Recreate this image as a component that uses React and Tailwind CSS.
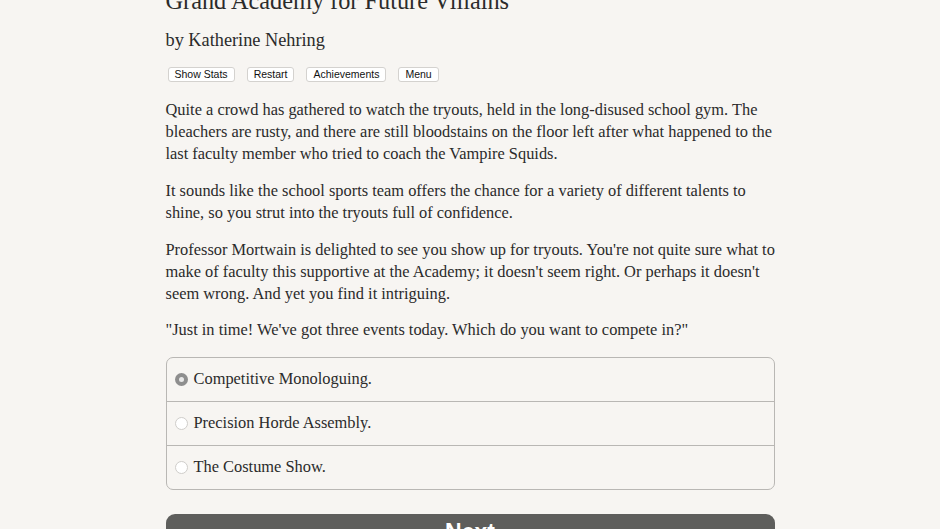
export default function App() {
  const serif = { fontFamily: '"Liberation Serif", "DejaVu Serif", serif' };
  const choices = ["Competitive Monologuing.", "Precision Horde Assembly.", "The Costume Show."];
  const L = ({ children }) => <span className="block whitespace-nowrap">{children}</span>;
  return (
    <div className="w-[940px] h-[529px] overflow-hidden bg-[#f7f5f2] text-[#2b2b2b]" style={serif}>
      <div className="w-[609px] mx-auto">
        <h1 className="text-[24.3px] leading-[30px] -mt-[14px] font-normal text-[#2b2b2b] whitespace-nowrap">Grand Academy for Future Villains</h1>
        <div className="text-[18.3px] leading-[24px] mt-[12px]">by Katherine Nehring</div>
        <div className="flex gap-[12px] mt-[15px] ml-[2px]" style={{ fontFamily: '"Liberation Sans", Arial, sans-serif' }}>
          {["Show Stats", "Restart", "Achievements", "Menu"].map((b) => (
            <div key={b} className="h-[15px] px-[6px] flex items-center text-[10.5px] bg-white border border-[#d4d2cf] rounded-[3px] text-[#111]">{b}</div>
          ))}
        </div>
        <div className="text-[16.4px] leading-[22px] mt-[17px]">
          <p><L>Quite a crowd has gathered to watch the tryouts, held in the long-disused school gym. The</L><L>bleachers are rusty, and there are still bloodstains on the floor left after what happened to the</L><L>last faculty member who tried to coach the Vampire Squids.</L></p>
          <p className="mt-[15px]"><L>It sounds like the school sports team offers the chance for a variety of different talents to</L><L>shine, so you strut into the tryouts full of confidence.</L></p>
          <p className="mt-[15px]"><L>Professor Mortwain is delighted to see you show up for tryouts. You're not quite sure what to</L><L>make of faculty this supportive at the Academy; it doesn't seem right. Or perhaps it doesn't</L><L>seem wrong. And yet you find it intriguing.</L></p>
          <p className="mt-[14px]"><L>"Just in time! We've got three events today. Which do you want to compete in?"</L></p>
        </div>
        <div className="mt-[16px] border border-[#b9b7b4] rounded-[7px]">
          {choices.map((c, i) => (
            <div key={c} className={`h-[43px] box-content flex items-center pl-[8px] gap-[6px] text-[16.4px] ${i > 0 ? "border-t border-[#b9b7b4]" : ""}`}>
              {i === 0 ? (
                <span className="w-[13px] h-[13px] rounded-full bg-[#8e8e8e] flex items-center justify-center">
                  <span className="w-[5px] h-[5px] rounded-full bg-[#e8e8e8]" />
                </span>
              ) : (
                <span className="w-[13px] h-[13px] rounded-full bg-white border border-[#cfcdca]" />
              )}
              <span>{c}</span>
            </div>
          ))}
        </div>
        <div className="mt-[24px] h-[44px] bg-[#5e5e5c] rounded-t-[9px] flex justify-center pt-[7px] leading-none text-white text-[23px] font-bold" style={{ fontFamily: '"Liberation Sans", Arial, sans-serif' }}>Next</div>
      </div>
    </div>
  );
}
